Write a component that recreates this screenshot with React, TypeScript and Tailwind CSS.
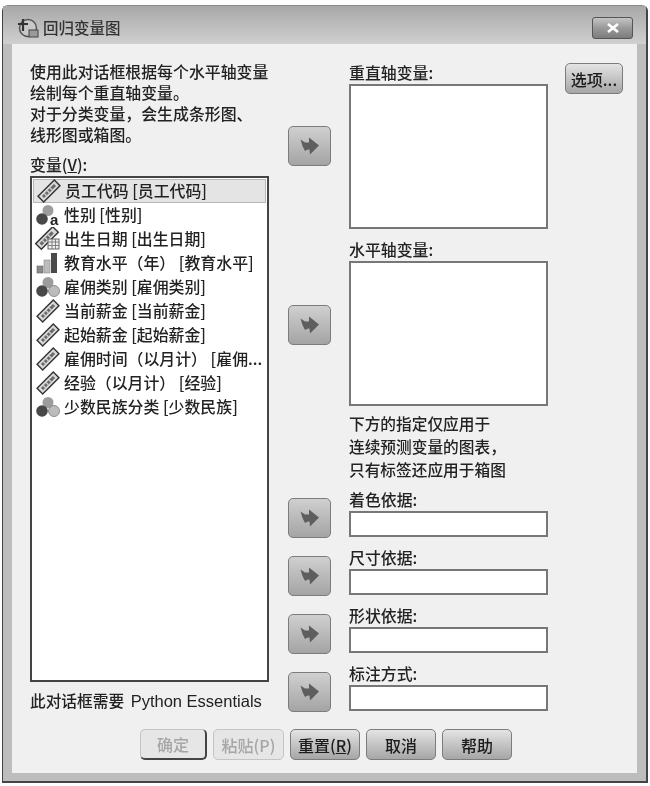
import React from "react";

const FONT = "font-['Noto_Sans_CJK_SC','Liberation_Sans',sans-serif]";

function Arrow({ className }: { className: string }) {
  return (
    <button className={`flex h-[40px] w-[43px] items-center justify-center rounded-[5px] border border-[#7c7c7c] bg-gradient-to-b from-[#d0d0d0] to-[#a4a4a4] ${className}`}>
      <svg width="22" height="22" viewBox="0 0 22 22">
        <path d="M1.5 4.5 L6 7.5 L10 7.5 L10 2.5 L20 10.5 L11 19.5 L10.5 14.5 Q8 14 6 16 Q3 11 1.5 4.5 Z" fill="#5e5e5e" />
      </svg>
    </button>
  );
}

function Ruler() {
  return (
    <svg width="26" height="24" viewBox="0 0 26 24" className="shrink-0">
      <g transform="rotate(-45 13 12)">
        <rect x="1.5" y="8" width="23" height="8" fill="#d8d8d8" stroke="#333333" strokeWidth="1.4" />
        <rect x="4.5" y="10.5" width="17" height="3" fill="#6a6a6a" />
        <path d="M8 10.5v3M12 10.5v3M16 10.5v3" stroke="#dddddd" strokeWidth="1.2" />
      </g>
    </svg>
  );
}

function Balls({ a }: { a?: boolean }) {
  return (
    <svg width="26" height="24" viewBox="0 0 26 24" className="shrink-0">
      <circle cx="13" cy="7.5" r="5.5" fill="#9c9c9c" />
      <circle cx="7" cy="16" r="5.8" fill="#484848" />
      {!a && <circle cx="19" cy="16" r="5.5" fill="#bcbcbc" stroke="#7a7a7a" strokeWidth="0.8" />}
      {a && <text x="15" y="22" fontSize="15" fontWeight="700" fill="#222" fontFamily="Liberation Sans">a</text>}
    </svg>
  );
}

function Bars() {
  return (
    <svg width="26" height="24" viewBox="0 0 26 24" className="shrink-0">
      <rect x="2" y="15" width="6" height="7" fill="#8a8a8a" stroke="#666" strokeWidth="0.6" />
      <rect x="9" y="9" width="6" height="13" fill="#bcbcbc" stroke="#888" strokeWidth="0.6" />
      <rect x="16" y="2" width="6" height="20" fill="#4a4a4a" />
    </svg>
  );
}

function DateRuler() {
  return (
    <svg width="26" height="24" viewBox="0 0 26 24" className="shrink-0">
      <g transform="rotate(-45 12 11)">
        <rect x="0" y="7" width="24" height="8" fill="#d8d8d8" stroke="#333333" strokeWidth="1.4" />
        <rect x="3" y="9.5" width="17" height="3" fill="#6a6a6a" />
        <path d="M7 9.5v3M11 9.5v3M15 9.5v3" stroke="#dddddd" strokeWidth="1.2" />
      </g>
      <rect x="13" y="12" width="11" height="10" fill="#eee" stroke="#666" />
      <path d="M13 15h11M17 12v10M20.5 12v10M13 18.5h11" stroke="#777" strokeWidth="0.9" />
    </svg>
  );
}

const rows: [React.ReactNode, string][] = [
  [<Ruler />, "员工代码 [员工代码]"],
  [<Balls a />, "性别 [性别]"],
  [<DateRuler />, "出生日期 [出生日期]"],
  [<Bars />, "教育水平（年） [教育水平]"],
  [<Balls />, "雇佣类别 [雇佣类别]"],
  [<Ruler />, "当前薪金 [当前薪金]"],
  [<Ruler />, "起始薪金 [起始薪金]"],
  [<Ruler />, "雇佣时间（以月计） [雇佣..."],
  [<Ruler />, "经验（以月计） [经验]"],
  [<Balls />, "少数民族分类 [少数民族]"],
];

function Field({ label, className }: { label: string; className: string }) {
  return (
    <div className={className}>
      <div className="h-[23px] text-[15.9px] leading-[23px] font-medium">{label}</div>
      <div className="h-[26px] w-[199px] border-2 border-[#777777] bg-white"></div>
    </div>
  );
}

function Btn({ children, className, dim }: { children: React.ReactNode; className: string; dim?: boolean }) {
  return (
    <button
      className={`flex h-[31px] items-center justify-center rounded-[5px] border text-[16px] font-medium ${
        dim
          ? "border-[#c4c4c4] bg-[#e6e6e6] text-[#a6a6a6]"
          : "border-[#7c7c7c] bg-gradient-to-b from-[#e4e4e4] to-[#a6a6a6] text-[#1c1c1c]"
      } ${className}`}
    >
      {children}
    </button>
  );
}

export default function App() {
  return (
    <div className={`h-[786px] w-[650px] bg-white pt-[5px] pl-[2px] text-[#222222] blur-[0.5px] ${FONT}`}>
      <div className="flex h-[778px] w-[646px] flex-col rounded-t-[6px] border border-r-2 border-b-2 border-[#444444] border-t-[#8a8a8a] bg-[#bdbdbd]">
        <div className="flex h-[38px] shrink-0 items-center bg-gradient-to-b from-[#a8a8a8] to-[#d0d0d0] pt-[6px] pr-[13px] pl-[13px]">
          <svg width="24" height="22" viewBox="0 0 24 22">
            <circle cx="12" cy="11" r="8.5" fill="#c8c8c8" stroke="#555" strokeWidth="1.5" />
            <path d="M7 2v12M2 7h10" stroke="#333" strokeWidth="2.2" />
            <rect x="13" y="13" width="9" height="7" fill="#999" stroke="#444" />
          </svg>
          <span className="ml-[3px] text-[15.5px] font-medium text-[#333333]">回归变量图</span>
          <div className="ml-auto flex h-[22px] w-[41px] items-center justify-center rounded-[3px] border border-[#555555] bg-gradient-to-b from-[#c4c4c4] via-[#9a9a9a] to-[#7c7c7c]">
            <svg width="14" height="10" viewBox="0 0 14 10">
              <path d="M2 1l10 8M12 1L2 9" stroke="#ffffff" strokeWidth="2.6" />
            </svg>
          </div>
        </div>

        <div className="mx-[9px] flex h-[729px] w-[625px] bg-[#f0f0f0]">
          <div className="w-[276px] shrink-0 pl-[18px]">
            <div className="mt-[17px] w-[250px] text-[15.9px] leading-[21px] font-medium">
              <div>使用此对话框根据每个水平轴变量</div>
              <div>绘制每个重直轴变量。</div>
              <div>对于分类变量，会生成条形图、</div>
              <div>线形图或箱图。</div>
            </div>
            <div className="mt-[8px] h-[23px] text-[15.9px] leading-[23px] font-medium">
              变量(<span className="underline">V</span>):
            </div>
            <div className="h-[506px] w-[239px] border-2 border-[#444444] bg-white px-px pt-px">
              {rows.map(([icon, text], i) => (
                <div
                  key={text}
                  className={`flex h-[24px] items-center gap-[3px] pl-[2px] text-[15.9px] font-medium whitespace-nowrap ${
                    i === 0 ? "border border-[#b8b8b8] bg-[#e4e4e4]" : ""
                  }`}
                >
                  {icon}
                  <span>{text}</span>
                </div>
              ))}
            </div>
            <div className="mt-[7px] text-[15.7px] font-medium whitespace-nowrap">
              此对话框需要 <span className="ml-[3px] font-['Liberation_Sans',sans-serif] text-[16.5px] font-normal">Python Essentials</span>
            </div>
          </div>

          <div className="w-[61px] shrink-0">
            <Arrow className="mt-[82px]" />
            <Arrow className="mt-[139px]" />
            <Arrow className="mt-[153px]" />
            <Arrow className="mt-[18px]" />
            <Arrow className="mt-[18px]" />
            <Arrow className="mt-[18px]" />
          </div>

          <div className="w-[216px] shrink-0">
            <div className="mt-[17px] h-[23px] text-[15.9px] leading-[23px] font-medium">重直轴变量:</div>
            <div className="h-[145px] w-[199px] border-2 border-[#777777] bg-white"></div>
            <div className="mt-[9px] h-[23px] text-[15.9px] leading-[23px] font-medium">水平轴变量:</div>
            <div className="h-[145px] w-[199px] border-2 border-[#777777] bg-white"></div>
            <div className="mt-[6px] text-[15.7px] leading-[23px] font-medium">
              <div>下方的指定仅应用于</div>
              <div>连续预测变量的图表，</div>
              <div>只有标签还应用于箱图</div>
            </div>
            <Field label="着色依据:" className="mt-[7px]" />
            <Field label="尺寸依据:" className="mt-[9px]" />
            <Field label="形状依据:" className="mt-[9px]" />
            <Field label="标注方式:" className="mt-[9px]" />
          </div>

          <div className="pt-[19px]">
            <Btn className="w-[58px]">选项...</Btn>
          </div>
        </div>

        <div className="relative">
          <div className="absolute -top-[44px] left-[137px] flex gap-[6px]">
            <Btn className="w-[67px] border-r-2 border-b-2 !border-r-[#444444] !border-b-[#444444]" dim>确定</Btn>
            <Btn className="w-[71px]" dim>粘贴(P)</Btn>
            <Btn className="w-[70px]">重置(<span className="underline">R</span>)</Btn>
            <Btn className="w-[70px]">取消</Btn>
            <Btn className="w-[70px]">帮助</Btn>
          </div>
        </div>
      </div>
    </div>
  );
}
